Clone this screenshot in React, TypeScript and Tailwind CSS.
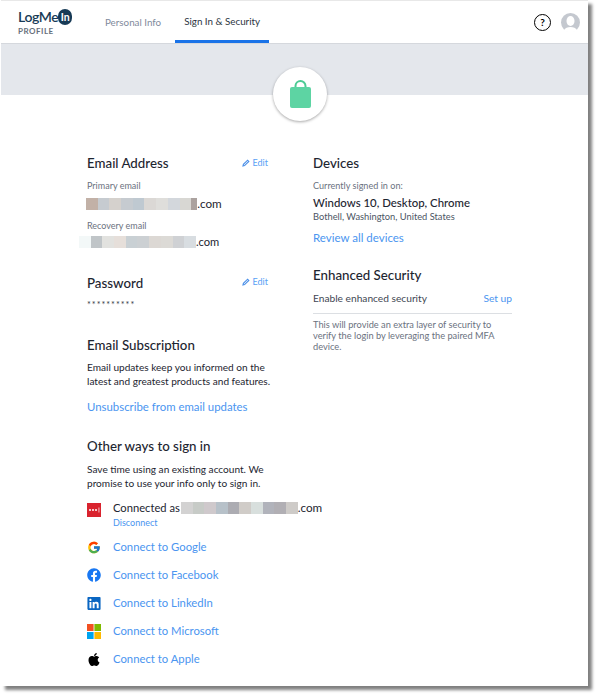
import { FcGoogle } from "react-icons/fc"
import { FaApple, FaFacebook, FaLinkedin } from "react-icons/fa"

function Blur({ colors, className }: { colors: string[]; className?: string }) {
  return (
    <span className={`flex h-3 ${className ?? ""}`}>
      {colors.map((c, i) => (
        <span key={i} className="h-3 w-[11.7px]" style={{ backgroundColor: c }} />
      ))}
    </span>
  )
}

function EditLink({ className }: { className?: string }) {
  return (
    <a className={`flex items-center gap-[3px] text-[9px] leading-3 text-[#5a9ff5] ${className ?? ""}`}>
      <svg width="8" height="8" viewBox="0 0 8 8" fill="none" stroke="#4a8fe8" strokeWidth="1.1">
        <path d="M1 7 L1.4 5.4 L5.6 1.2 L6.8 2.4 L2.6 6.6 Z" />
      </svg>
      Edit
    </a>
  )
}

function LastPassIcon() {
  return (
    <svg width="14" height="14" viewBox="0 0 14 14">
      <rect width="14" height="14" fill="#d9232e" />
      <circle cx="3" cy="7" r="1" fill="#fff" />
      <circle cx="6" cy="7" r="1" fill="#fff" />
      <circle cx="9" cy="7" r="1" fill="#fff" />
      <rect x="11.6" y="4.5" width="0.7" height="5" fill="#fff" />
    </svg>
  )
}

function MicrosoftIcon() {
  return (
    <svg width="14" height="15" viewBox="0 0 14 15">
      <rect width="6.6" height="7" fill="#f25022" />
      <rect x="7.4" width="6.6" height="7" fill="#7fba00" />
      <rect y="8" width="6.6" height="7" fill="#00a4ef" />
      <rect x="7.4" y="8" width="6.6" height="7" fill="#ffb900" />
    </svg>
  )
}

const connections = [
  { name: "Google", icon: <FcGoogle size={15} /> },
  { name: "Facebook", icon: <FaFacebook size={14} color="#1877f2" /> },
  { name: "LinkedIn", icon: <FaLinkedin size={15} color="#0a66c2" /> },
  { name: "Microsoft", icon: <MicrosoftIcon /> },
  { name: "Apple", icon: <FaApple size={15} color="#000" /> },
]

export default function App() {
  return (
    <div className="h-[694px] w-[596px] overflow-hidden bg-white font-['Lato',sans-serif] text-[#1d2530]">
      <div className="relative ml-px h-[686px] w-[587px] border-t border-[#e8e8e8] bg-white shadow-[4px_4px_3px_#808080]">
        <header className="flex h-[43px] items-stretch border-b border-[#d5d8dd] bg-white">
          <div className="ml-[17px] mt-[8px] w-[70px]">
            <div className="flex items-center text-[14px] font-semibold leading-4 tracking-[-0.4px] text-[#173a56]">
              LogMe
              <span className="flex h-4 w-[14px] items-center justify-center rounded-full bg-[#173a56] text-[10.5px] font-bold leading-none tracking-normal text-white">
                In
              </span>
            </div>
            <div className="mt-[1px] text-[8px] font-bold leading-[10px] tracking-[0.5px] text-[#67707c]">PROFILE</div>
          </div>
          <nav className="ml-[17px] flex text-[9.8px]">
            <a className="flex items-center text-[#7f8a9c]">Personal Info</a>
            <a className="ml-[14px] flex items-center border-b-[3px] border-[#1a73e8] px-[9px] pt-[2px] text-[#2c3542]">
              Sign In &amp; Security
            </a>
          </nav>
          <div className="ml-auto mr-[8px] flex items-center gap-[10px]">
            <span className="flex h-[17px] w-[17px] items-center justify-center rounded-full border-[1.5px] border-black text-[10px] font-bold leading-none text-black">
              ?
            </span>
            <svg width="19" height="19" viewBox="0 0 19 19">
              <circle cx="9.5" cy="9.5" r="9.5" fill="#c4c8cf" />
              <ellipse cx="9.5" cy="8" rx="4" ry="5" fill="#fff" />
              <path d="M3 17 C5 13 14 13 16 17 C13 20 6 20 3 17 Z" fill="#fff" />
            </svg>
          </div>
        </header>
        <div className="h-[51px] bg-[#e4e7ec]" />
        <div className="absolute left-[272px] top-[66px] flex h-[54px] w-[54px] items-center justify-center rounded-full bg-white shadow-[0_1px_3px_rgba(0,0,0,0.35)]">
          <svg width="21" height="28" viewBox="0 0 21 28">
            <path d="M5.5 9 V6 a5 5 0 0 1 10 0 V9" fill="none" stroke="#4ccb94" strokeWidth="2" />
            <rect y="7" width="21" height="21" rx="2" fill="#5dd4a3" />
          </svg>
        </div>

        <div className="flex pl-[86px] pt-[60px]">
          <div className="w-[226px]">
            <div className="w-[186px]">
              <div className="flex w-[181px] items-start justify-between">
                <h2 className="text-[13.3px] font-medium leading-4">Email Address</h2>
                <EditLink className="mt-[2px]" />
              </div>
              <div className="mt-[9px] text-[9px] leading-3 text-[#6b7280]">Primary email</div>
              <div className="-ml-px mt-[6px] flex h-3 items-center text-[11.7px]">
                <Blur colors={["#c2b1a7", "#c6cbd0", "#d5d1cd", "#c6cbd0", "#bfc9d1", "#dbd8d5", "#dfdedb", "#d3d7dc", "#d8d7d3"]} />
                <span className="h-3 w-[6px] bg-[#aba29f]" />
                .com
              </div>
              <div className="mt-[10px] text-[9px] leading-3 text-[#6b7280]">Recovery email</div>
              <div className="-ml-[8px] mt-[4px] flex h-3 items-center text-[11.2px]">
                <Blur colors={["#f3f8f8", "#c0c5c8", "#e2e2df", "#e6dfda", "#c9d0d4", "#ccd0d3", "#dcd8d4", "#dcdad6", "#cfd1d4", "#d8dde1"]} />
                .com
              </div>

              <div className="mt-[27px] flex w-[181px] items-start justify-between">
                <h2 className="text-[13.3px] font-medium leading-4">Password</h2>
                <EditLink className="mt-px" />
              </div>
              <div className="mt-[8px] text-[9px] leading-3 tracking-[1px] text-[#333a45]">**********</div>

              <h2 className="mt-[26px] text-[13.3px] font-medium leading-4">Email Subscription</h2>
              <p className="mt-[7px] text-[10.1px] leading-[14px]">
                Email updates keep you informed on the latest and greatest products and features.
              </p>
              <a className="mt-[11px] block text-[11.4px] leading-4 text-[#4a95f0]">Unsubscribe from email updates</a>

              <h2 className="mt-[23px] text-[13.3px] font-medium leading-4">Other ways to sign in</h2>
              <p className="mt-[8px] w-[180px] text-[10.1px] leading-[14px]">
                Save time using an existing account. We promise to use your info only to sign in.
              </p>
            </div>

            <div className="mt-[12px] flex gap-[12px]">
              <div className="mt-px w-[14px]">
                <LastPassIcon />
              </div>
              <div>
                <div className="flex h-3 items-center whitespace-nowrap text-[11.2px]">
                  Connected as
                  <Blur className="ml-px" colors={["#d3d2d2", "#c7cbc7", "#cfc9cc", "#b7c1c9", "#acacb2", "#d0ccc8", "#d8dfdd", "#b1b3bb", "#b1afb4", "#cecbc8"]} />
                  <span className="text-[11.7px]">.com</span>
                </div>
                <a className="mt-[3px] block text-[9px] leading-3 text-[#4a95f0]">Disconnect</a>
              </div>
            </div>
            <ul className="mt-[10px] flex flex-col gap-[12px]">
              {connections.map((c) => (
                <li key={c.name} className="flex h-4 items-center gap-[12px]">
                  <span className="flex w-[14px] justify-center">{c.icon}</span>
                  <a className="text-[11.3px] text-[#4a95f0]">Connect to {c.name}</a>
                </li>
              ))}
            </ul>
          </div>

          <div className="w-[199px]">
            <h2 className="text-[13.3px] font-medium leading-4">Devices</h2>
            <div className="mt-[9px] text-[9.1px] leading-3 text-[#6b7280]">Currently signed in on:</div>
            <div className="mt-[3px] text-[11.4px] font-medium leading-4">Windows 10, Desktop, Chrome</div>
            <div className="text-[9.3px] leading-3 text-[#4b5563]">Bothell, Washington, United States</div>
            <a className="mt-[7px] block text-[11.5px] leading-4 text-[#4a95f0]">Review all devices</a>
            <h2 className="mt-[21px] text-[13.3px] font-medium leading-4">Enhanced Security</h2>
            <div className="mt-[9px] flex items-center justify-between border-b border-[#dcdfe3] pb-[9px] text-[10.2px] leading-3">
              <span className="text-[#3f4753]">Enable enhanced security</span>
              <a className="text-[#4a95f0]">Set up</a>
            </div>
            <p className="mt-[6px] text-[9.25px] leading-[10.8px] text-[#6b7280]">
              This will provide an extra layer of security to verify the login by leveraging the paired MFA device.
            </p>
          </div>
        </div>
      </div>
    </div>
  )
}
